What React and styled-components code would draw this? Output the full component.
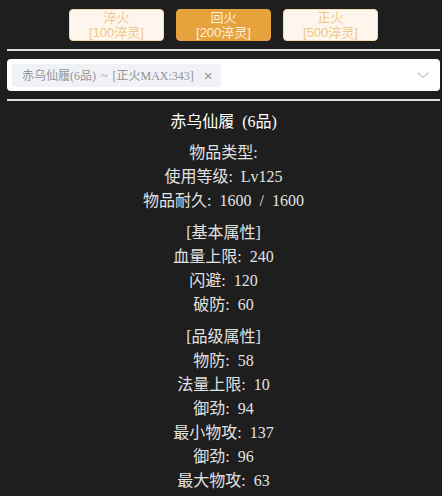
import React from "react";
import styled, { createGlobalStyle } from "styled-components";

const GlobalStyle = createGlobalStyle`
  html, body {
    margin: 0;
    padding: 0;
    background: #1e1e1e;
  }
  body {
    font-family: "Liberation Serif", "Noto Sans CJK SC", serif;
  }
`;

const levels = [
  { name: "淬火", cost: "[100淬灵]", active: false },
  { name: "回火", cost: "[200淬灵]", active: true },
  { name: "正火", cost: "[500淬灵]", active: false },
];

const groups = [
  ["物品类型:", "使用等级: Lv125", "物品耐久: 1600 / 1600"],
  ["[基本属性]", "血量上限: 240", "闪避: 120", "破防: 60"],
  [
    "[品级属性]",
    "物防: 58",
    "法量上限: 10",
    "御劲: 94",
    "最小物攻: 137",
    "御劲: 96",
    "最大物攻: 63",
  ],
];

const App = () => {
  return (
    <Page>
      <GlobalStyle />
      <Toolbar>
        {levels.map((lv) => (
          <LevelButton key={lv.name} $active={lv.active}>
            {lv.name}
            <br />
            {lv.cost}
          </LevelButton>
        ))}
      </Toolbar>
      <Rule />
      <Select>
        <Tag>
          赤乌仙履(6品) ~ [正火MAX:343]
          <TagClose>×</TagClose>
        </Tag>
        <svg width="14" height="14" viewBox="0 0 14 14" fill="none">
          <path
            d="M2 5l5 4.5L12 5"
            stroke="#c0c4cc"
            strokeWidth="1.2"
            strokeLinecap="round"
          />
        </svg>
      </Select>
      <Rule />
      <Details>
        <Title>赤乌仙履 (6品)</Title>
        {groups.map((g, i) => (
          <Group key={i}>
            {g.map((line, j) => (
              <Line key={j}>{line}</Line>
            ))}
          </Group>
        ))}
      </Details>
    </Page>
  );
};

const Page = styled.div`
  padding: 9px 2px 0 7px;
  display: flex;
  flex-direction: column;
  gap: 8px;
`;

const Toolbar = styled.div`
  display: flex;
  justify-content: center;
  gap: 12px;
`;

const LevelButton = styled.button`
  width: 95px;
  height: 32px;
  padding: 0;
  border-radius: 4px;
  border: 1px solid ${(p) => (p.$active ? "#e6a23c" : "#f5dab1")};
  background: ${(p) => (p.$active ? "#e6a23c" : "#fdf6ec")};
  color: ${(p) => (p.$active ? "#fdf0dc" : "#f0c78a")};
  font-family: "Liberation Sans", "Noto Sans CJK SC", sans-serif;
  font-size: 13px;
  line-height: 15px;
  text-align: center;
`;

const Rule = styled.div`
  height: 2px;
  background: #dcdcdc;
`;

const Select = styled.div`
  height: 32px;
  background: #fff;
  border-radius: 4px;
  display: flex;
  align-items: center;
  justify-content: space-between;
  padding: 0 10px 0 5px;
  box-sizing: border-box;
`;

const Tag = styled.div`
  height: 23px;
  display: flex;
  align-items: center;
  gap: 10px;
  padding: 0 8px 0 10px;
  background: #f0f2f5;
  border-radius: 3px;
  color: #909399;
  font-size: 12px;
  word-spacing: 2px;
`;

const TagClose = styled.span`
  font-family: "Liberation Sans", sans-serif;
  font-size: 15px;
  color: #909399;
`;

const Details = styled.div`
  margin-top: 1px;
  display: flex;
  flex-direction: column;
  align-items: center;
  gap: 8px;
  color: #e2e2e2;
  font-size: 16px;
  line-height: 24px;
  word-spacing: 4px;
`;

const Title = styled.div`
  color: #fff;
  margin-bottom: -1px;
`;

const Group = styled.div`
  display: flex;
  flex-direction: column;
  align-items: center;
`;

const Line = styled.div`
  white-space: pre;
`;

export default App;
